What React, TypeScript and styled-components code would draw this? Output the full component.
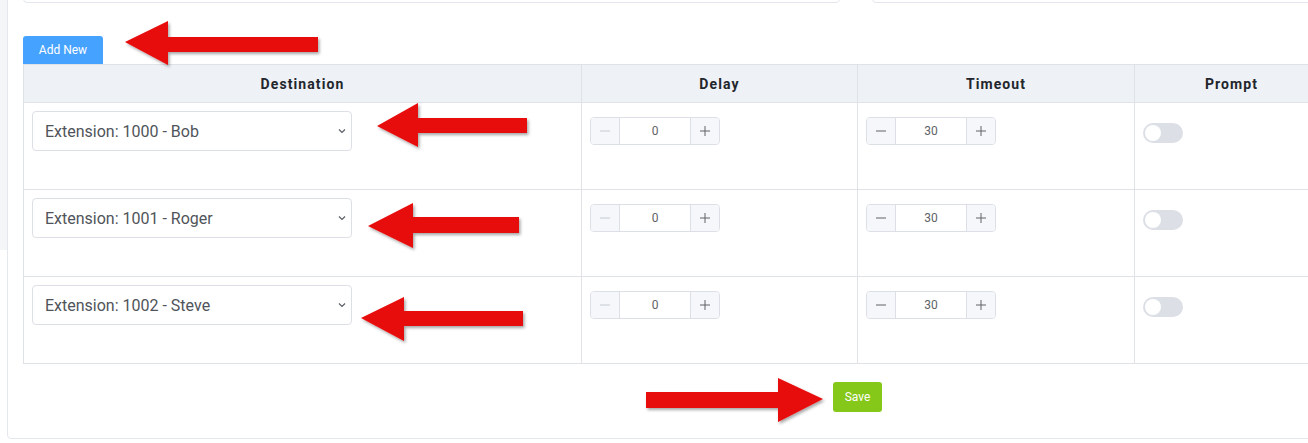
import React from "react";
import styled, { createGlobalStyle } from "styled-components";

const GlobalStyle = createGlobalStyle`
  html, body {
    margin: 0;
    padding: 0;
    background: #ffffff;
    overflow: hidden;
    font-family: Roboto, "Liberation Sans", Arial, sans-serif;
  }
`;

const Page = styled.div`
  position: relative;
  display: flex;
  align-items: flex-start;
  width: 1308px;
  height: 443px;
  overflow: hidden;
`;

const Gutter = styled.div`
  flex: none;
  width: 7px;
  height: 250px;
  background: #f4f5f7;
`;

const Card = styled.div`
  flex: none;
  width: 1701px;
  margin-top: -53px;
  box-sizing: border-box;
  border: 1px solid #e4e7ed;
  border-radius: 4px;
  padding: 15px 15px 26px;
  background: #ffffff;
`;

const FieldRow = styled.div`
  display: grid;
  grid-template-columns: 817px 1fr;
  column-gap: 32px;
`;

const FieldBox = styled.div`
  height: 40px;
  box-sizing: border-box;
  border: 1px solid #e4e7ed;
  border-radius: 4px;
  background: #fff;
`;

const Toolbar = styled.div`
  display: flex;
  margin-top: 33px;
`;

const Button = styled.button<{ $tone: "blue" | "green" }>`
  height: ${(p) => (p.$tone === "blue" ? "28px" : "30px")};
  width: ${(p) => (p.$tone === "blue" ? "80px" : "49px")};
  padding: 0;
  border: none;
  border-radius: ${(p) => (p.$tone === "blue" ? "3px 3px 0 0" : "3px")};
  background: ${(p) => (p.$tone === "blue" ? "#46a2ff" : "#85c81a")};
  color: #ffffff;
  font-family: Roboto, "Liberation Sans", Arial, sans-serif;
  font-size: 12px;
  line-height: 1;
  cursor: pointer;
`;

const Grid = styled.div`
  display: grid;
  grid-template-columns: 558px 276px 277px 194px;
  width: max-content;
  border-top: 1px solid #dfe2e7;
  border-left: 1px solid #dfe2e7;
`;

const HeadCell = styled.div`
  height: 38px;
  box-sizing: border-box;
  display: flex;
  align-items: center;
  justify-content: center;
  background: #eef1f6;
  border-right: 1px solid #dfe2e7;
  border-bottom: 1px solid #dfe2e7;
  font-size: 14px;
  font-weight: 700;
  letter-spacing: 1.1px;
  color: #22262c;
`;

const BodyCell = styled.div`
  height: 87px;
  box-sizing: border-box;
  padding: 8px;
  border-right: 1px solid #dfe2e7;
  border-bottom: 1px solid #dfe2e7;
`;

const Line = styled.div`
  height: 40px;
  display: flex;
  align-items: center;
`;

const SelectWrap = styled.div`
  position: relative;
  width: 320px;
`;

const Select = styled.select`
  appearance: none;
  -webkit-appearance: none;
  width: 100%;
  height: 40px;
  box-sizing: border-box;
  padding: 0 28px 0 12px;
  border: 1px solid #dcdfe6;
  border-radius: 4px;
  background: #ffffff;
  color: #50545a;
  font-family: Roboto, "Liberation Sans", Arial, sans-serif;
  font-size: 16px;
  outline: none;
`;

const Chevron = styled.svg`
  position: absolute;
  right: 6px;
  top: 17px;
  pointer-events: none;
`;

const Stepper = styled.div`
  display: flex;
  width: 130px;
  height: 28px;
  box-sizing: border-box;
  border: 1px solid #dcdfe6;
  border-radius: 4px;
  overflow: hidden;
  background: #ffffff;
`;

const StepButton = styled.span<{ $side: "left" | "right"; $disabled?: boolean }>`
  flex: none;
  width: 28px;
  display: flex;
  align-items: center;
  justify-content: center;
  background: #f5f7fa;
  color: ${(p) => (p.$disabled ? "#c6cad1" : "#606266")};
  ${(p) => (p.$side === "left" ? "border-right: 1px solid #dcdfe6;" : "border-left: 1px solid #dcdfe6;")}
`;

const StepValue = styled.span`
  flex: 1;
  display: flex;
  align-items: center;
  justify-content: center;
  font-size: 12px;
  color: #606266;
`;

const Toggle = styled.span`
  position: relative;
  display: inline-block;
  width: 40px;
  height: 20px;
  margin-top: 4px;
  border-radius: 10px;
  background: #dcdfe6;
  &::after {
    content: "";
    position: absolute;
    top: 2px;
    left: 2px;
    width: 16px;
    height: 16px;
    border-radius: 50%;
    background: #ffffff;
  }
`;

const Footer = styled.div`
  display: flex;
  justify-content: center;
  margin-top: 18px;
`;

const Overlay = styled.svg`
  position: absolute;
  left: 0;
  top: 0;
  pointer-events: none;
`;

const MinusIcon = () => (
  <svg width="12" height="12" viewBox="0 0 12 12">
    <path d="M1 6h10" stroke="currentColor" strokeWidth="1" />
  </svg>
);

const PlusIcon = () => (
  <svg width="12" height="12" viewBox="0 0 12 12">
    <path d="M1 6h10M6 1v10" stroke="currentColor" strokeWidth="1" />
  </svg>
);

type Row = { name: string; delay: number; timeout: number };

const rows: Row[] = [
  { name: "Extension: 1000 - Bob", delay: 0, timeout: 30 },
  { name: "Extension: 1001 - Roger", delay: 0, timeout: 30 },
  { name: "Extension: 1002 - Steve", delay: 0, timeout: 30 },
];

const NumberStepper = ({ value, min }: { value: number; min: number }) => (
  <Stepper>
    <StepButton $side="left" $disabled={value <= min}>
      <MinusIcon />
    </StepButton>
    <StepValue>{value}</StepValue>
    <StepButton $side="right">
      <PlusIcon />
    </StepButton>
  </Stepper>
);

type Arrow = { tx: number; ty: number; hx: number; ht: number; hb: number; ex: number; st: number; sb: number };

const arrows: Arrow[] = [
  { tx: 125, ty: 42, hx: 168, ht: 21, hb: 65, ex: 318, st: 37, sb: 52 },
  { tx: 377, ty: 126, hx: 418, ht: 103, hb: 147, ex: 527, st: 118, sb: 133 },
  { tx: 368, ty: 226, hx: 413, ht: 203, hb: 248, ex: 519, st: 217, sb: 233 },
  { tx: 361, ty: 318, hx: 404, ht: 297, hb: 341, ex: 523, st: 311, sb: 326 },
  { tx: 823, ty: 399, hx: 778, ht: 378, hb: 422, ex: 646, st: 392, sb: 408 },
];

const arrowPoints = (a: Arrow) =>
  [
    [a.tx, a.ty],
    [a.hx, a.ht],
    [a.hx, a.st],
    [a.ex, a.st],
    [a.ex, a.sb],
    [a.hx, a.sb],
    [a.hx, a.hb],
  ]
    .map((p) => p.join(","))
    .join(" ");

export default function App() {
  return (
    <>
      <GlobalStyle />
      <Page>
        <Gutter />
        <Card>
          <FieldRow>
            <FieldBox />
            <FieldBox />
          </FieldRow>
          <Toolbar>
            <Button $tone="blue">Add New</Button>
          </Toolbar>
          <Grid>
            <HeadCell>Destination</HeadCell>
            <HeadCell>Delay</HeadCell>
            <HeadCell>Timeout</HeadCell>
            <HeadCell>Prompt</HeadCell>
            {rows.map((r) => (
              <React.Fragment key={r.name}>
                <BodyCell>
                  <Line>
                    <SelectWrap>
                      <Select defaultValue={r.name}>
                        <option>{r.name}</option>
                      </Select>
                      <Chevron width="8" height="6" viewBox="0 0 8 6">
                        <path d="M1 1.5l3 3 3-3" fill="none" stroke="#5a5e66" strokeWidth="1.2" />
                      </Chevron>
                    </SelectWrap>
                  </Line>
                </BodyCell>
                <BodyCell>
                  <Line>
                    <NumberStepper value={r.delay} min={0} />
                  </Line>
                </BodyCell>
                <BodyCell>
                  <Line>
                    <NumberStepper value={r.timeout} min={0} />
                  </Line>
                </BodyCell>
                <BodyCell>
                  <Line>
                    <Toggle />
                  </Line>
                </BodyCell>
              </React.Fragment>
            ))}
          </Grid>
          <Footer>
            <Button $tone="green">Save</Button>
          </Footer>
        </Card>
        <Overlay width="1308" height="443" viewBox="0 0 1308 443">
          <defs>
            <filter id="arrowShadow" x="-10%" y="-30%" width="130%" height="170%">
              <feDropShadow dx="1.5" dy="2" stdDeviation="1.6" floodColor="#000" floodOpacity="0.35" />
            </filter>
          </defs>
          {arrows.map((a, i) => (
            <polygon key={i} points={arrowPoints(a)} fill="#e80909" filter="url(#arrowShadow)" />
          ))}
        </Overlay>
      </Page>
    </>
  );
}
